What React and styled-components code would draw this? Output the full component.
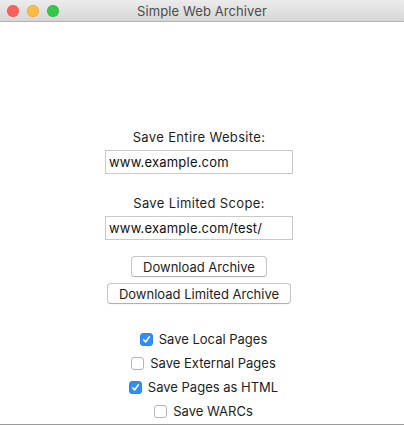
import styled, { createGlobalStyle } from "styled-components";
import { useState } from "react";

const GlobalStyle = createGlobalStyle`
  html, body {
    margin: 0;
    padding: 0;
    background: #ffffff;
  }
  body {
    font-family: Inter, "Noto Sans", "Liberation Sans", sans-serif;
    font-size: 13px;
    color: #1e1e1e;
  }
`;

const Window = styled.div`
  width: 404px;
  height: 425px;
  box-sizing: border-box;
  display: flex;
  flex-direction: column;
  background: #ffffff;
  border-bottom: 1px solid #9a9a9a;
  overflow: hidden;
`;

const TitleBar = styled.div`
  height: 22px;
  box-sizing: border-box;
  flex-shrink: 0;
  display: flex;
  align-items: center;
  position: relative;
  background: linear-gradient(#ececec, #d6d6d6);
  border-bottom: 1px solid #b3b3b3;
`;

const Lights = styled.div`
  display: flex;
  gap: 8px;
  padding-left: 7px;
`;

const Light = styled.span`
  width: 12px;
  height: 12px;
  border-radius: 50%;
  background: ${(p) => p.color};
  box-shadow: inset 0 0 0 0.5px rgba(0, 0, 0, 0.15);
`;

const Title = styled.div`
  position: absolute;
  left: 0;
  right: 0;
  text-align: center;
  color: #4c4c4c;
  font-size: 13px;
  letter-spacing: 0.1px;
  pointer-events: none;
`;

const Body = styled.div`
  flex: 1;
  display: flex;
  flex-direction: column;
  align-items: center;
  padding-top: 107px;
`;

const Form = styled.div`
  display: flex;
  flex-direction: column;
  align-items: center;
  margin-right: 6px;
`;

const Label = styled.div`
  line-height: 16px;
  margin-bottom: 5px;
  letter-spacing: 0.35px;
  color: #1e1e1e;
`;

const Field = styled.input`
  width: 188px;
  height: 24px;
  box-sizing: border-box;
  border: 1px solid #c9c9c9;
  outline: none;
  padding: 0 3px;
  font: inherit;
  font-size: 13px;
  letter-spacing: 0.2px;
  color: #111;
  margin-bottom: ${(p) => p.gap}px;
`;

const Button = styled.button`
  height: 21px;
  box-sizing: border-box;
  padding: 0 11px;
  background: #ffffff;
  border: 1px solid #c6c6c6;
  border-bottom-color: #b0b0b0;
  border-radius: 4px;
  font: inherit;
  font-size: 13px;
  color: #1e1e1e;
  margin-bottom: ${(p) => p.gap}px;
  box-shadow: 0 0.5px 0 rgba(0, 0, 0, 0.05);
`;

const Checks = styled.div`
  display: flex;
  flex-direction: column;
  align-items: center;
  gap: 8px;
  margin-left: 3px;
`;

const CheckRow = styled.label`
  display: flex;
  align-items: center;
  gap: 6px;
  height: 16px;
  line-height: 16px;
`;

const Box = styled.span`
  width: 13px;
  height: 13px;
  box-sizing: border-box;
  border-radius: 3px;
  display: flex;
  align-items: center;
  justify-content: center;
  background: ${(p) => (p.checked ? "#2e8efb" : "#ffffff")};
  border: 1px solid ${(p) => (p.checked ? "#2a85f0" : "#b4b4b4")};
`;

function Check({ label, initial }) {
  const [on, setOn] = useState(initial);
  return (
    <CheckRow onClick={() => setOn(!on)}>
      <Box checked={on}>
        {on && (
          <svg width="9" height="9" viewBox="0 0 9 9">
            <path d="M1.6 4.8 L3.6 6.9 L7.4 1.8" fill="none" stroke="#fff" strokeWidth="1.6" strokeLinecap="round" strokeLinejoin="round" />
          </svg>
        )}
      </Box>
      {label}
    </CheckRow>
  );
}

export default function App() {
  return (
    <>
      <GlobalStyle />
      <Window>
        <TitleBar>
          <Lights>
            <Light color="#fc605c" />
            <Light color="#fdbc40" />
            <Light color="#34c84a" />
          </Lights>
          <Title>Simple Web Archiver</Title>
        </TitleBar>
        <Body>
          <Form>
            <Label>Save Entire Website:</Label>
            <Field defaultValue="www.example.com" gap={21} />
            <Label>Save Limited Scope:</Label>
            <Field defaultValue="www.example.com/test/" gap={16} />
            <Button gap={6}>Download Archive</Button>
            <Button gap={27}>Download Limited Archive</Button>
          </Form>
          <Checks>
            <Check label="Save Local Pages" initial={true} />
            <Check label="Save External Pages" initial={false} />
            <Check label="Save Pages as HTML" initial={true} />
            <Check label="Save WARCs" initial={false} />
          </Checks>
        </Body>
      </Window>
    </>
  );
}
